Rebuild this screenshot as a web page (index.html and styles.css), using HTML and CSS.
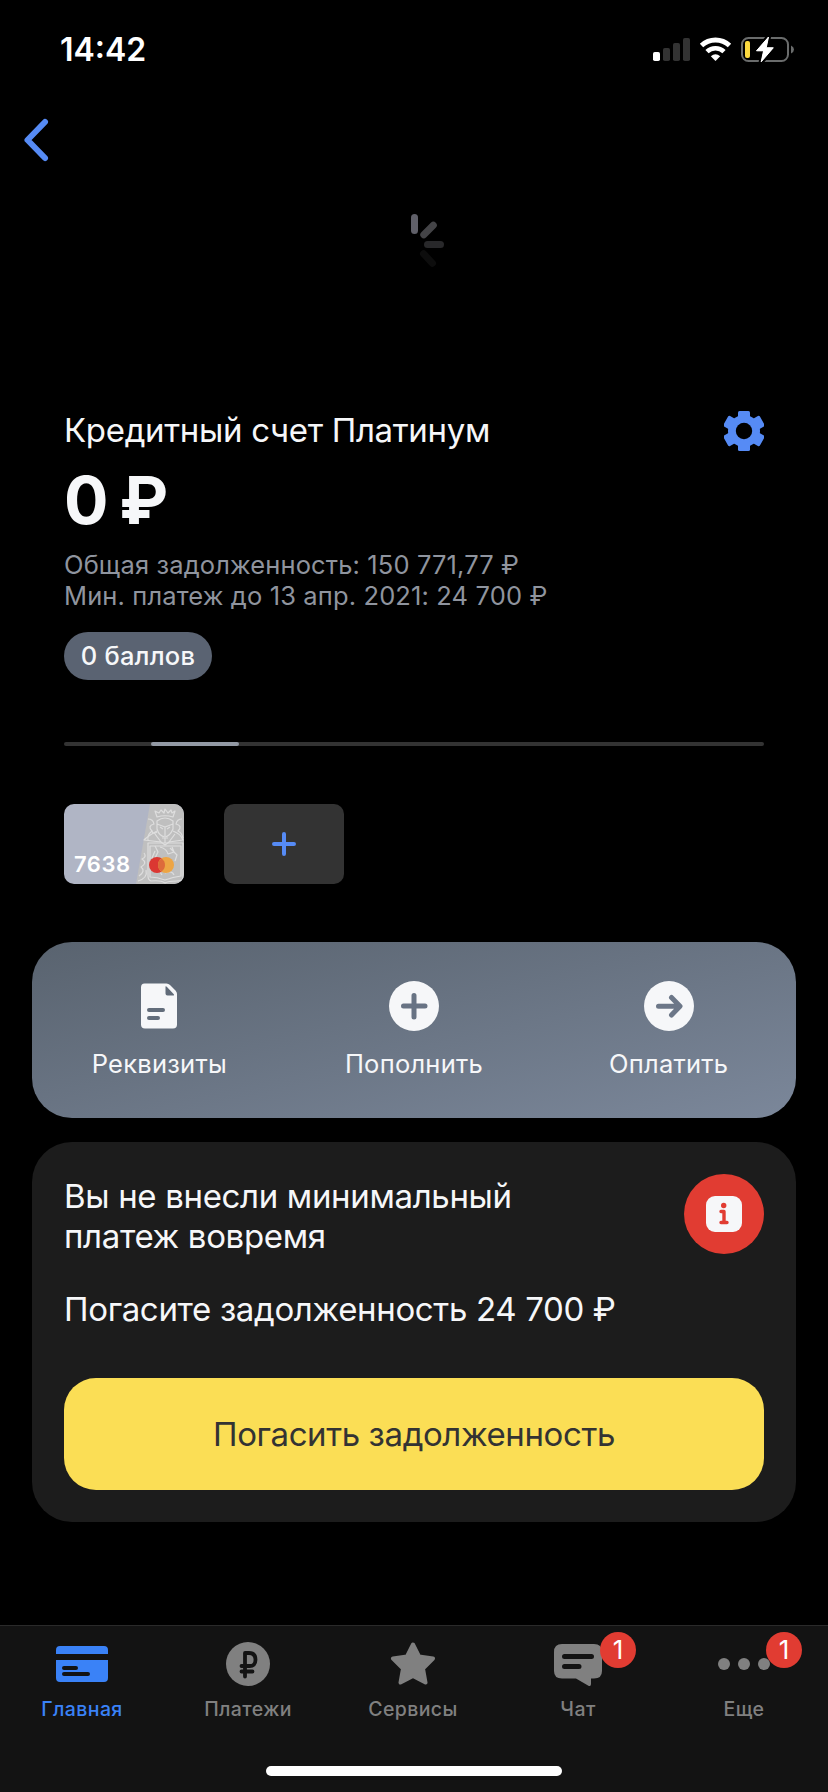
FILE: index.html
```html
<!DOCTYPE html>
<html lang="ru">
<head>
<meta charset="utf-8">
<title>Кредитный счет Платинум</title>
<link rel="stylesheet" href="styles.css">
</head>
<body>
<div class="screen">
  <header class="status">
    <span class="time">14:42</span>
    <svg class="status-icons" width="142" height="28" viewBox="0 0 142 28">
      <rect x="0" y="16" width="7" height="9" rx="1.8" fill="#fff"/>
      <rect x="10" y="12" width="7" height="13" rx="1.8" fill="#333"/>
      <rect x="20" y="7" width="7" height="18" rx="1.8" fill="#333"/>
      <rect x="30" y="2" width="7" height="23" rx="1.8" fill="#333"/>
      <g fill="none" stroke="#fff">
        <path d="M48.500 9.500A20.500 20.500 0 0 1 76.500 9.500" stroke-width="5"/>
        <path d="M54 15.600A12.500 12.500 0 0 1 71 15.600" stroke-width="4.700"/>
      </g>
      <path d="M57.800 20.200Q62.500 16.200 67.200 20.200L62.500 25Z" fill="#fff"/>
      <rect x="89" y="2" width="46" height="23" rx="6.500" fill="none" stroke="#6a6c6c" stroke-width="2"/>
      <path d="M138 9.500Q141 11 141 13.500T138 17.500Z" fill="#6a6c6c"/>
      <rect x="92" y="5" width="5" height="17" rx="2" fill="#fbd93f"/>
      <path d="M115.500 1L103.500 14.800H110.600L108.200 25.800L120.300 11.800H113.200Z" fill="#fff" stroke="#000" stroke-width="5" stroke-linejoin="round" paint-order="stroke"/>
      <path d="M115.500 1L103.500 14.800H110.600L108.200 25.800L120.300 11.800H113.200Z" fill="#fff" stroke="#fff" stroke-width="1" stroke-linejoin="round"/>
    </svg>
  </header>

  <nav class="nav">
    <svg width="32" height="48" viewBox="0 0 32 48"><path d="M25 6L7.500 24L25 42" fill="none" stroke="#568bf5" stroke-width="6" stroke-linecap="round" stroke-linejoin="round"/></svg>
  </nav>

  <div class="loader">
    <svg width="60" height="60" viewBox="0 0 60 60" stroke-width="7" stroke-linecap="round">
      <path d="M30.500 3.500V16.500" stroke="#606069"/>
      <path d="M39.800 20.700L49.300 11.300" stroke="#444447"/>
      <path d="M43.500 30.500H56.500" stroke="#28282a"/>
      <path d="M39.500 39.700L48.500 49.300" stroke="#0d0d0d"/>
    </svg>
  </div>

  <section class="account">
    <div class="title-row">
      <h1 class="title">Кредитный счет Платинум</h1>
      <svg width="40" height="40" viewBox="0 0 40 40">
        <defs>
          <mask id="gear-hole"><rect width="40" height="40" fill="#fff"/><circle cx="20" cy="20" r="8.200" fill="#000"/></mask>
        </defs>
        <g fill="#568bf5" mask="url(#gear-hole)">
          <circle cx="20" cy="20" r="16"/>
          <rect x="14" y="0" width="12" height="40" rx="1.500"/>
          <rect x="14" y="-1" width="12" height="42" rx="1.500" transform="rotate(60 20 20)"/>
          <rect x="14" y="-1" width="12" height="42" rx="1.500" transform="rotate(120 20 20)"/>
        </g>
      </svg>
    </div>
    <div class="amount">0 ₽</div>
    <div class="detail">Общая задолженность: 150 771,77 ₽</div>
    <div class="detail">Мин. платеж до 13 апр. 2021: 24 700 ₽</div>
    <div class="points">0 баллов</div>
    <div class="track"><div class="thumb"></div></div>
    <div class="cards">
      <div class="bank-card">
        <svg class="card-art" width="120" height="80" viewBox="0 0 120 80">
          <path d="M86 0H120V80H72Z" fill="#bfbfbf"/>
          <g fill="none" stroke="#dedede" stroke-width="1.200" stroke-linejoin="round">
            <path d="M93 13L91 7L95 9L97 6L100 9L101 5L104 9L107 6L108 9L111 7L109 13Q101 10.500 93 13Z"/>
            <path d="M93 17Q101 11 109 17V25Q106 32 101 33Q95 32 93 25ZM93 20L101 23L109 20M101 23V32M96 23L99 25M106 23L103 25"/>
            <path d="M93 27Q84 32 80 36L97 38L101 41L105 38L119 36Q117 30 109 27M91 30L97 38M111 30L105 38M98 34H104M101 34V39"/>
            <path d="M84 15Q89 15 90 20Q83 22 88 27Q83 31 84 36M88 27Q89 31 93 28M118 15Q113 15 112 20Q119 22 114 27Q118 29 119 34"/>
            <path d="M84 39H119V74Q119 77 113 77Q104 77 101 79Q97 76 87 77Q84 76 84 72ZM86 42H117V72Q109 73 101 76Q93 73 86 73Z"/>
            <path d="M91 42L94 48L91 54M96 43Q103 45 104 50L110 48L108 43M106 44L113 51L111 57M91 47L88 54L93 58M90 67L94 65L98 71M101 69Q108 66 110 71M80 49Q83 53 78 55Q84 59 77 63Q82 67 75 72M74 77Q84 74 82 66"/>
          </g>
          <circle cx="93" cy="61" r="8" fill="#db3732"/>
          <circle cx="102" cy="61" r="8" fill="#eda544"/>
          <path d="M97.500 54.400A8 8 0 0 1 97.500 67.600A8 8 0 0 1 97.500 54.400Z" fill="#dd6a3b"/>
        </svg>
        <span class="card-number">7638</span>
      </div>
      <div class="add-card">
        <svg width="24" height="24" viewBox="0 0 24 24"><path d="M12 2V22M2 12H22" stroke="#568bf5" stroke-width="4" stroke-linecap="round"/></svg>
      </div>
    </div>
  </section>

  <section class="actions">
    <div class="action">
      <svg width="50" height="50" viewBox="0 0 50 50">
        <path fill-rule="evenodd" fill="#f6f7f9" d="M10.500 2.500H32.500Q34.500 2.500 36 4L41.500 9.500Q43 11 43 13V43.500Q43 47.500 39 47.500H11Q7 47.500 7 43.500V6.500Q7 2.500 10.500 2.500ZM31.500 5.500V12.500Q31.500 14.500 33.500 14.500H39.500Q40.500 14.300 39.800 13.300L33 6Q32 5 31.500 5.500ZM15 27A2 2 0 0 0 15 31H29A2 2 0 0 0 29 27ZM15 35A2 2 0 0 0 15 39H24A2 2 0 0 0 24 35Z"/>
      </svg>
      <span>Реквизиты</span>
    </div>
    <div class="action">
      <svg width="50" height="50" viewBox="0 0 50 50"><circle cx="25" cy="25" r="25" fill="#f6f7f9"/><path d="M25 14.500V36M14.500 25H36" stroke="#687384" stroke-width="5" stroke-linecap="round"/></svg>
      <span>Пополнить</span>
    </div>
    <div class="action">
      <svg width="50" height="50" viewBox="0 0 50 50"><circle cx="25" cy="25" r="25" fill="#f6f7f9"/><path d="M14.500 25.200H35M27.500 16.500L36 25.200L27.500 34" fill="none" stroke="#6c7788" stroke-width="5" stroke-linecap="round" stroke-linejoin="round"/></svg>
      <span>Оплатить</span>
    </div>
  </section>

  <section class="alert">
    <div class="alert-head">
      <div class="alert-text">Вы не внесли минимальный<br>платеж вовремя</div>
      <svg width="80" height="80" viewBox="0 0 80 80">
        <circle cx="40" cy="40" r="40" fill="#e13c32"/>
        <rect x="22" y="22" width="36" height="36" rx="9" fill="#f6f7f9"/>
        <circle cx="39.700" cy="31.500" r="2.700" fill="#e13c32"/>
        <path d="M37 37.500H40V48.500M37 48.500H43" fill="none" stroke="#e13c32" stroke-width="3.400" stroke-linecap="round" stroke-linejoin="round"/>
      </svg>
    </div>
    <div class="alert-text debt">Погасите задолженность 24 700 ₽</div>
    <button class="pay-button">Погасить задолженность</button>
  </section>

  <footer class="tabbar">
    <div class="tabs">
      <div class="tab active">
        <svg width="52" height="44" viewBox="0 0 52 44"><path fill-rule="evenodd" fill="#3a82f7" d="M0 12V8Q0 4 4 4H48Q52 4 52 8V12ZM0 18H52V36Q52 40 48 40H4Q0 40 0 36ZM8 24A2 2 0 0 0 8 28H20A2 2 0 0 0 20 24ZM8 30A2 2 0 0 0 8 34H32A2 2 0 0 0 32 30Z"/></svg>
        <span>Главная</span>
      </div>
      <div class="tab">
        <svg width="44" height="44" viewBox="0 0 44 44"><circle cx="22" cy="22" r="22" fill="#808080"/><path d="M19 34.500V11H23Q29.500 11 29.500 17.700T23 24H15.500M15.500 29.500H26.500" fill="none" stroke="#131313" stroke-width="3.800" stroke-linecap="round" stroke-linejoin="round"/></svg>
        <span>Платежи</span>
      </div>
      <div class="tab">
        <svg width="46" height="44" viewBox="0 0 46 44"><path d="M23 2.500L29 14.500L43 16.500L33 26.500L35.500 40.500L23 34L10.500 40.500L13 26.500L3 16.500L17 14.500Z" fill="#808080" stroke="#808080" stroke-width="4" stroke-linejoin="round"/></svg>
        <span>Сервисы</span>
      </div>
      <div class="tab">
        <div class="icon-wrap">
          <svg width="48" height="44" viewBox="0 0 48 44"><path fill-rule="evenodd" fill="#808080" d="M8 2H40Q48 2 48 10V29Q48 36.500 40 36.500H37V42Q37 45 34 43.500L22 36.500H8Q0 36.500 0 29V10Q0 2 8 2ZM10.500 12A2.500 2.500 0 0 0 10.500 17H37.500A2.500 2.500 0 0 0 37.500 12ZM10.500 22A2.500 2.500 0 0 0 10.500 27H25A2.500 2.500 0 0 0 25 22Z"/></svg>
          <b class="badge chat-badge">1</b>
        </div>
        <span>Чат</span>
      </div>
      <div class="tab">
        <div class="icon-wrap">
          <svg width="52" height="44" viewBox="0 0 52 44" fill="#808080"><circle cx="6" cy="22" r="6"/><circle cx="26" cy="22" r="6"/><circle cx="46" cy="22" r="6"/></svg>
          <b class="badge more-badge">1</b>
        </div>
        <span>Еще</span>
      </div>
    </div>
    <div class="home-indicator"></div>
  </footer>
</div>
</body>
</html>
```
FILE: styles.css
```css
* { box-sizing: border-box; }
body { margin: 0; background: #000; font-family: Inter, "Noto Sans", sans-serif; color: #f6f7f9; }
svg { display: block; flex: none; }
.screen { width: 828px; height: 1792px; display: flex; flex-direction: column; overflow: hidden; }

.status { height: 99px; padding: 0 33px 0 60px; display: flex; align-items: center; justify-content: space-between; color: #fff; }
.time { font-size: 32px; font-weight: 600; line-height: 40px; }
.nav { height: 82px; padding: 17px 20px 0; }
.loader { height: 230px; padding-top: 33px; display: flex; justify-content: center; }

.account { height: 531px; padding: 0 64px; }
.title-row { height: 40px; display: flex; justify-content: space-between; margin-bottom: 11px; }
.title { margin: 0; font-size: 33px; font-weight: 400; line-height: 38px; letter-spacing: -0.32px; white-space: nowrap; }
.amount { font-size: 66px; font-weight: 700; line-height: 76px; letter-spacing: -1px; word-spacing: -3px; margin-bottom: 11px; }
.detail { font-size: 25.5px; line-height: 31px; letter-spacing: 0.13px; color: #8f949e; white-space: nowrap; }
.points { width: 148px; height: 48px; margin-top: 21px; border-radius: 24px; background: #5a6372; font-size: 25.5px; font-weight: 500; line-height: 48px; letter-spacing: 0.2px; text-align: center; white-space: nowrap; }
.track { height: 4px; margin-top: 62px; border-radius: 2px; background: #333; }
.thumb { width: 88px; height: 4px; margin-left: 87px; border-radius: 2px; background: #9299a4; }
.cards { display: flex; gap: 40px; margin-top: 58px; }
.bank-card, .add-card { width: 120px; height: 80px; border-radius: 10px; overflow: hidden; }
.bank-card { display: grid; background: #b0b5c5; color: #fff; }
.card-art, .card-number { grid-area: 1 / 1; }
.card-number { align-self: end; padding: 0 0 6px 10px; font-size: 22px; font-weight: 600; line-height: 28px; letter-spacing: 0.5px; }
.add-card { display: flex; align-items: center; justify-content: center; background: #333; }

.actions { height: 176px; margin: 0 32px; padding-top: 39px; border-radius: 40px; display: grid; grid-template-columns: repeat(3, 1fr); background: linear-gradient(167deg, #59636f, #7b879a); }
.action { display: flex; flex-direction: column; align-items: center; gap: 17px; font-size: 25.5px; line-height: 32px; letter-spacing: 0.25px; }

.alert { height: 380px; margin: 24px 32px 0; padding: 32px; border-radius: 40px; background: #1c1c1c; }
.alert-head { height: 80px; display: flex; justify-content: space-between; }
.alert-text { margin-top: 2px; font-size: 33px; line-height: 40px; letter-spacing: -0.34px; white-space: nowrap; }
.debt { margin-top: 35px; }
.pay-button { display: block; width: 100%; height: 112px; margin-top: 49px; padding: 0; border: 0; border-radius: 32px; background: #fbde55; color: #333; font: 400 33px/112px Inter, "Noto Sans", sans-serif; letter-spacing: -0.4px; }

.tabbar { height: 167px; margin-top: auto; border-top: 1px solid #2a2a2a; background: #131313; }
.tabs { height: 140px; display: grid; grid-template-columns: 164px 168px 162px 168px 164px; }
.tab { padding-top: 16px; display: flex; flex-direction: column; align-items: center; gap: 11px; color: #808080; font-size: 19.5px; font-weight: 500; line-height: 24px; letter-spacing: 0.4px; }
.active { color: #3a82f7; }
.icon-wrap { position: relative; }
.badge { position: absolute; top: -10px; width: 36px; height: 36px; border-radius: 50%; background: #e13c32; color: #fff; font-size: 26px; font-weight: 400; line-height: 36px; letter-spacing: 0; text-align: center; }
.chat-badge { left: 46px; }
.more-badge { left: 48px; }
.home-indicator { width: 296px; height: 10px; margin: 0 auto; border-radius: 5px; background: #fff; }
```
